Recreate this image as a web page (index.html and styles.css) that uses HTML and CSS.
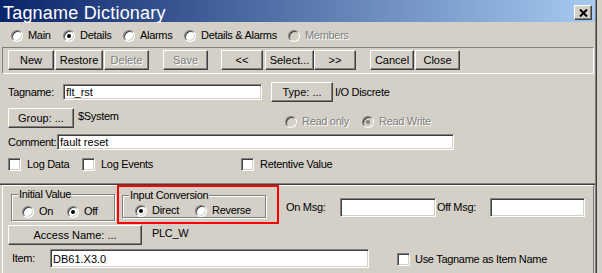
FILE: index.html
```html
<!DOCTYPE html>
<html lang="en">
<head>
  <meta charset="UTF-8">
  <title>Tagname Dictionary</title>
  <link rel="stylesheet" href="styles.css">
</head>
<body>
  <div class="window">
    <div class="titlebar">
      <span class="title">Tagname Dictionary</span>
      <span class="close-btn">
        <svg width="9" height="8" viewBox="0 0 9 8"><path d="M1 0.5 L8 7.5 M8 0.5 L1 7.5" stroke="#000" stroke-width="2" fill="none"/></svg>
      </span>
    </div>

    <div class="modes">
      <label class="opt"><span class="radio"></span>Main</label>
      <label class="opt"><span class="radio on"></span>Details</label>
      <label class="opt"><span class="radio"></span>Alarms</label>
      <label class="opt"><span class="radio"></span>Details &amp; Alarms</label>
      <label class="opt disabled"><span class="radio"></span>Members</label>
    </div>

    <div class="toolbar">
      <button class="btn btn-new">New</button>
      <button class="btn btn-restore">Restore</button>
      <button class="btn btn-delete" disabled>Delete</button>
      <button class="btn btn-save" disabled>Save</button>
      <button class="btn btn-prev">&lt;&lt;</button>
      <button class="btn btn-select">Select...</button>
      <button class="btn btn-next">&gt;&gt;</button>
      <button class="btn btn-cancel">Cancel</button>
      <button class="btn btn-close">Close</button>
    </div>

    <div class="details">
      <div class="row row-tag">
        <span class="lbl-tag">Tagname:</span>
        <input class="field f-tag" value="flt_rst">
        <button class="btn btn-type">Type: ...</button>
        <span class="type-val">I/O Discrete</span>
      </div>
      <div class="row row-group">
        <button class="btn btn-group">Group: ...</button>
        <span class="group-val">$System</span>
        <div class="access">
          <label class="opt opt-ro disabled"><span class="radio"></span>Read only</label>
          <label class="opt disabled"><span class="radio on"></span>Read Write</label>
        </div>
      </div>
      <div class="row row-comment">
        <span class="lbl-comment">Comment:</span>
        <input class="field f-comment" value="fault reset">
      </div>
      <div class="row row-checks">
        <label class="opt opt-check w-logdata"><span class="check"></span>Log Data</label>
        <label class="opt opt-check w-logevents"><span class="check"></span>Log Events</label>
        <label class="opt opt-check"><span class="check"></span>Retentive Value</label>
      </div>
    </div>
    <div class="sep"></div>

    <div class="lower">
      <div class="row-a">
        <div class="grp grp-init">
          <span class="grp-title">Initial Value</span>
          <label class="opt opt-on"><span class="radio"></span>On</label>
          <label class="opt"><span class="radio on"></span>Off</label>
        </div>
        <div class="redbox">
          <div class="grp grp-conv">
            <span class="grp-title">Input Conversion</span>
            <label class="opt opt-direct"><span class="radio on"></span>Direct</label>
            <label class="opt"><span class="radio"></span>Reverse</label>
          </div>
        </div>
        <span class="msg-lbl lbl-on">On Msg:</span>
        <input class="field f-msg f-on" value="">
        <span class="msg-lbl lbl-off">Off Msg:</span>
        <input class="field f-msg f-off" value="">
      </div>
      <div class="row-b">
        <button class="btn btn-access">Access Name: ...</button>
        <span class="access-val">PLC_W</span>
      </div>
      <div class="row-c">
        <span class="lbl-item">Item:</span>
        <input class="field f-item" value="DB61.X3.0">
        <label class="opt opt-usetag"><span class="check"></span>Use Tagname as Item Name</label>
      </div>
    </div>
  </div>
</body>
</html>
```

FILE: styles.css
```css
*,
*::before,
*::after {
  box-sizing: border-box;
}
body {
  margin: 0;
  background: #d4d0c8;
  font: 11px "Liberation Sans", Arial, sans-serif;
  letter-spacing: -0.3px;
  color: #000;
}
.window {
  width: 596px;
  height: 273px;
  overflow: hidden;
  background: #d4d0c8;
  border-right: 1px solid #808080;
  box-shadow: 1px 0 #404040;
}

/* title bar */
.titlebar {
  height: 22px;
  display: flex;
  justify-content: space-between;
  align-items: flex-start;
  background: linear-gradient(to right, #0a246a, #a6caf0);
}
.title {
  color: #fff;
  font-size: 18px;
  line-height: 18px;
  letter-spacing: 0.2px;
  padding: 4px 0 0 3px;
}
.close-btn {
  width: 18px;
  height: 15px;
  margin: 5px 3px 0 0;
  display: flex;
  align-items: center;
  justify-content: center;
  background: #d4d0c8;
  border: 1px solid;
  border-color: #fff #404040 #404040 #fff;
  box-shadow: inset -1px -1px #808080;
}

/* radios and checks */
.opt {
  display: flex;
  align-items: center;
  gap: 5px;
  white-space: nowrap;
  line-height: 13px;
}
.radio {
  position: relative;
  flex: none;
  width: 12px;
  height: 12px;
  border-radius: 50%;
  background: #fff;
  border: 1px solid;
  border-color: #808080 #fff #fff #808080;
  box-shadow: inset 1px 1px #404040, inset -1px -1px #d4d0c8;
}
.radio.on::after {
  content: "";
  position: absolute;
  left: 3px;
  top: 3px;
  width: 4px;
  height: 4px;
  border-radius: 50%;
  background: #000;
}
.check {
  flex: none;
  width: 13px;
  height: 13px;
  background: #fff;
  border: 1px solid;
  border-color: #808080 #fff #fff #808080;
  box-shadow: inset 1px 1px #404040, inset -1px -1px #d4d0c8;
}
.disabled {
  color: #808080;
  text-shadow: 1px 1px #fff;
}
.disabled .radio {
  background: #d4d0c8;
}
.disabled .radio.on::after {
  background: #808080;
}

.modes {
  height: 25px;
  padding: 2px 0 0 11px;
  display: grid;
  grid-template-columns: 52px 60px 61px 104px auto;
  align-items: center;
}

/* buttons */
.btn {
  flex: none;
  height: 20px;
  padding: 0;
  font: inherit;
  color: #000;
  background: #d4d0c8;
  border: 1px solid;
  border-color: #fff #404040 #404040 #fff;
  box-shadow: inset -1px -1px #808080, inset 1px 1px #d4d0c8;
}
.btn:disabled {
  color: #808080;
  text-shadow: 1px 1px #fff;
}
.toolbar {
  margin-left: 2px;
  width: 592px;
  height: 27px;
  padding: 2px 5px 3px;
  display: flex;
  border: 1px solid;
  border-color: #808080 #fff #fff #808080;
}
.btn-new { width: 46px; }
.btn-restore { width: 48px; margin-left: 1px; }
.btn-delete { width: 45px; margin-left: 1px; }
.btn-save { width: 45px; margin-left: 14px; }
.btn-prev { width: 42px; margin-left: 13px; }
.btn-select { width: 49px; margin-left: 2px; }
.btn-next { width: 42px; }
.btn-cancel { width: 44px; margin-left: 14px; }
.btn-close { width: 45px; margin-left: 1px; }

/* edit fields */
.field {
  flex: none;
  height: 16px;
  margin: 0;
  padding: 0 2px;
  font: inherit;
  color: #000;
  background: #fff;
  border: 1px solid;
  border-color: #808080 #fff #fff #808080;
  box-shadow: inset 1px 1px #404040, inset -1px -1px #d4d0c8;
  outline: none;
}

/* upper details */
.details {
  height: 109px;
  padding: 8px 0 0 8px;
}
.row {
  display: flex;
  align-items: center;
}
.row-tag {
  height: 20px;
}
.lbl-tag { width: 55px; }
.f-tag { width: 199px; }
.btn-type { width: 62px; margin-left: 9px; }
.type-val { margin-left: 2px; }

.row-group {
  margin-top: 6px;
  height: 20px;
  align-items: flex-start;
}
.btn-group { width: 66px; }
.group-val {
  width: 207px;
  margin-left: 4px;
  padding-top: 2px;
  line-height: 13px;
}
.access {
  display: flex;
  margin-top: 7px;
}
.opt-ro { width: 77px; }

.row-comment {
  margin-top: 6px;
  height: 16px;
}
.lbl-comment { width: 49px; }
.f-comment { width: 397px; }

.row-checks {
  margin-top: 8px;
  height: 13px;
}
.opt-check { gap: 6px; }
.w-logdata { width: 74px; }
.w-logevents { width: 159px; }

.sep {
  height: 2px;
  border-top: 1px solid #808080;
  border-bottom: 1px solid #404040;
}

/* lower panel */
.lower {
  margin-left: 2px;
  width: 592px;
  height: 88px;
  border-top: 1px solid #fff;
  border-left: 1px solid #fff;
  border-right: 1px solid #808080;
}
.row-a {
  display: flex;
  align-items: flex-start;
}
.grp {
  position: relative;
  display: flex;
  align-items: flex-start;
  border: 1px solid #808080;
  box-shadow: inset 1px 1px #fff, 1px 1px #fff;
}
.grp-title {
  position: absolute;
  top: -7px;
  left: 6px;
  padding: 0 1px;
  line-height: 13px;
  background: #d4d0c8;
}
.grp-init {
  margin: 8px 0 0 8px;
  width: 104px;
  height: 27px;
  padding: 10px 0 0 10px;
}
.opt-on { width: 45px; }
.redbox {
  margin: -1px 0 0 2px;
  padding: 8px 11px 4px 3px;
  border: 2px solid #f00;
}
.grp-conv {
  width: 144px;
  height: 23px;
  padding: 8px 0 0 12px;
}
.opt-direct { width: 60px; }
.msg-lbl {
  margin-top: 12px;
  line-height: 19px;
}
.lbl-on { width: 54px; margin-left: 7px; }
.lbl-off { width: 53px; margin-left: 1px; }
.f-msg {
  margin-top: 12px;
  height: 19px;
}
.f-on { width: 96px; }
.f-off { width: 95px; }

.row-b {
  display: flex;
  align-items: flex-start;
  margin-top: 1px;
}
.btn-access { width: 134px; margin-left: 5px; }
.access-val {
  margin-left: 10px;
  line-height: 16px;
}

.row-c {
  display: flex;
  align-items: flex-start;
  margin-top: 4px;
}
.lbl-item {
  width: 38px;
  margin-left: 9px;
  line-height: 19px;
}
.f-item {
  width: 319px;
  height: 19px;
}
.opt-usetag {
  margin: 4px 0 0 28px;
}
```
